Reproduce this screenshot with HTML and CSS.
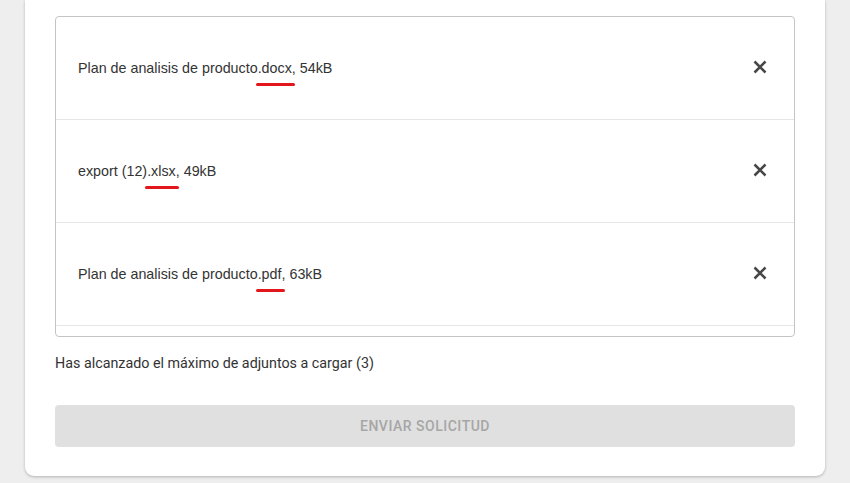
FILE: index.html
```html
<!DOCTYPE html>
<html lang="es">
<head>
<meta charset="utf-8">
<link rel="stylesheet" href="styles.css">
</head>
<body>
<div class="card">
  <div class="files">
    <div class="file">
      <span class="name">Plan de analisis de producto<span class="ext">.docx</span>, 54kB</span>
      <button class="remove" aria-label="Eliminar"><svg viewBox="0 0 14 14" width="14" height="14"><path d="M1.5 1.5L12.5 12.5M12.5 1.5L1.5 12.5"/></svg></button>
    </div>
    <div class="file">
      <span class="name">export (12)<span class="ext">.xlsx</span>, 49kB</span>
      <button class="remove" aria-label="Eliminar"><svg viewBox="0 0 14 14" width="14" height="14"><path d="M1.5 1.5L12.5 12.5M12.5 1.5L1.5 12.5"/></svg></button>
    </div>
    <div class="file">
      <span class="name">Plan de analisis de producto<span class="ext">.pdf</span>, 63kB</span>
      <button class="remove" aria-label="Eliminar"><svg viewBox="0 0 14 14" width="14" height="14"><path d="M1.5 1.5L12.5 12.5M12.5 1.5L1.5 12.5"/></svg></button>
    </div>
  </div>
  <p class="helper">Has alcanzado el máximo de adjuntos a cargar (3)</p>
  <button class="submit" disabled>Enviar solicitud</button>
</div>
</body>
</html>
```

FILE: styles.css
```css
html, body {
  margin: 0;
  padding: 0;
}
body {
  background: #eeeeee;
  font-family: Roboto, "Liberation Sans", Arial, sans-serif;
  height: 483px;
  overflow: hidden;
}
.card {
  margin-left: 25px;
  width: 800px;
  box-sizing: border-box;
  background: #ffffff;
  border-radius: 0 0 9px 9px;
  box-shadow: 0 1px 3px rgba(0, 0, 0, 0.25);
  padding: 16px 30px 29px;
  display: flex;
  flex-direction: column;
}
.files {
  height: 321px;
  box-sizing: border-box;
  border: 1px solid #c4c4c4;
  border-radius: 4px;
  overflow: hidden;
}
.file {
  height: 102px;
  border-bottom: 1px solid #e6e6e6;
  display: flex;
  align-items: center;
  justify-content: space-between;
  padding: 0 27px 0 22px;
}
.name {
  font-family: "Liberation Sans", Arial, sans-serif;
  font-size: 14.3px;
  color: #333333;
}
.ext {
  position: relative;
}
.ext::after {
  content: "";
  position: absolute;
  left: -2px;
  right: -3px;
  bottom: -10px;
  height: 3.5px;
  border-radius: 2px;
  background: #e3161b;
}
.remove {
  border: 0;
  background: none;
  padding: 0;
  width: 14px;
  height: 14px;
  display: flex;
  margin-top: -3px;
  cursor: pointer;
}
.remove svg {
  stroke: #474747;
  stroke-width: 2.5;
  fill: none;
}
.helper {
  margin: 16px 0 0;
  font-size: 14.3px;
  line-height: 20px;
  color: #333333;
}
.submit {
  margin-top: 32px;
  height: 42px;
  border: 0;
  border-radius: 4px;
  background: #e0e0e0;
  color: #a6a6a6;
  font-family: Roboto, sans-serif;
  font-weight: 500;
  font-size: 14px;
  letter-spacing: 0.5px;
  text-transform: uppercase;
}
```
